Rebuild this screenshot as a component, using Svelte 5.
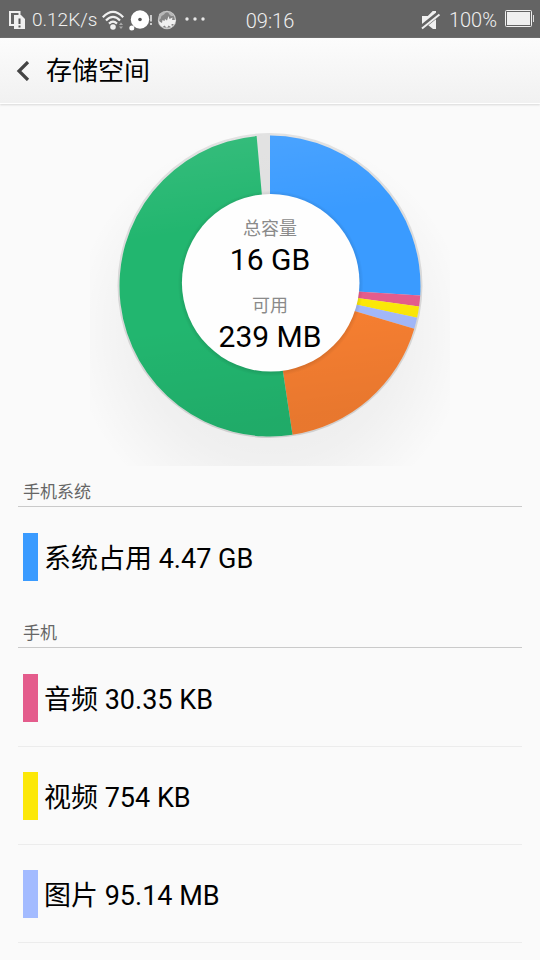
<script>
  const total = "16 GB"
  const available = "239 MB"

  // angles in degrees, clockwise from the top
  const slices = [
    { from: 0, to: 93.6, color: "#3a9bff" },
    { from: 93.6, to: 97.8, color: "#e45c8c" },
    { from: 97.8, to: 102.2, color: "#fce808" },
    { from: 102.2, to: 106.5, color: "#a3b9fb" },
    { from: 106.5, to: 171.4, color: "#f77f31" },
    { from: 171.4, to: 354.9, color: "#22b66f" },
  ]

  const groups = [
    {
      title: "手机系统",
      items: [{ name: "系统占用", size: "4.47 GB", color: "#3a9bff" }],
    },
    {
      title: "手机",
      items: [
        { name: "音频", size: "30.35 KB", color: "#e45c8c" },
        { name: "视频", size: "754 KB", color: "#fce808" },
        { name: "图片", size: "95.14 MB", color: "#a3bbff" },
      ],
    },
  ]

  function point(angle, r) {
    const rad = (angle * Math.PI) / 180
    return `${(180 + r * Math.sin(rad)).toFixed(2)} ${(180 - r * Math.cos(rad)).toFixed(2)}`
  }

  function slicePath({ from, to }) {
    const large = to - from > 180 ? 1 : 0
    return `M180 180L${point(from, 150.5)}A150.5 150.5 0 ${large} 1 ${point(to, 150.5)}Z`
  }
</script>

<div class="status-bar">
  <div class="status-side">
    <svg width="17" height="19" viewBox="0 0 17 19" aria-hidden="true">
      <path d="M5 14H1V1H10.500V4" fill="none" stroke="#f0f0f0" stroke-width="2" />
      <path d="M5 4H12L16 8V18H5Z" fill="#f0f0f0" />
      <path d="M10.500 7.500V13M10.500 14.500V16.500" stroke="#555" stroke-width="2" />
    </svg>
    <span class="speed">0.12K/s</span>
    <svg width="23" height="20" viewBox="0 0 23 20" aria-hidden="true">
      <g fill="none" stroke="#f0f0f0" stroke-width="2.200">
        <path d="M.8 7.200Q11 -3.500 21.200 7.200" />
        <path d="M4 10.600Q11 3.300 18 10.600" />
        <path d="M7 13.600Q11 9.800 15 13.600" />
      </g>
      <circle cx="11" cy="17" r="2.800" fill="#f0f0f0" />
      <path d="M17 15L19 12.500L21 15ZM17 16.500L19 19L21 16.500Z" fill="#aaa" />
    </svg>
    <svg class="disc" width="24" height="21" viewBox="0 0 24 21" aria-hidden="true">
      <circle cx="11" cy="9.500" r="9.200" fill="#fff" />
      <circle cx="11" cy="9.500" r="1.800" fill="#555" />
      <circle cx="2.800" cy="18" r="2.500" fill="#fff" />
      <path d="M22 5V11.500M22 13V15" stroke="#eee" stroke-width="1.500" />
    </svg>
    <svg class="globe" width="20" height="20" viewBox="0 0 20 20" aria-hidden="true">
      <circle cx="10" cy="10" r="8.500" fill="#858585" stroke="#c8c8c8" stroke-width="1.400" />
      <path d="M2 4L6 1.500L9 2L7 4.500L4.500 6L3.500 9L1.500 10ZM11 1.500L15 3L17 6L14 6L12 4Z" fill="#b8b8b8" />
      <path d="M1.500 11L5 13L5.500 10L7.500 11L8 9L10 10.500L11.500 6L12.500 9L15.500 7.500L15 10L18.800 10L17.500 14L14.500 14L15 17.500L11.500 15.500L10 18L7.500 15.500L5.500 17L3 15Z" fill="#f0f0f0" />
    </svg>
    <svg class="more" width="20" height="4" viewBox="0 0 20 4" aria-hidden="true">
      <g fill="#e8e8e8">
        <circle cx="2" cy="2" r="1.700" />
        <circle cx="10" cy="2" r="1.700" />
        <circle cx="18" cy="2" r="1.700" />
      </g>
    </svg>
  </div>
  <time>09:16</time>
  <div class="status-side right">
    <svg width="20" height="20" viewBox="0 0 20 20" aria-hidden="true">
      <path d="M1 6H7L12 1H15V19H12L7 15H1Z" fill="#f0f0f0" />
      <path d="M0 18L18 3.500" stroke="#646464" stroke-width="5" />
      <path d="M1 18.500L18.500 4.500" stroke="#f0f0f0" stroke-width="2" />
      <path d="M1 6H7L12 1H14.500L1 12.500Z" fill="#f0f0f0" />
    </svg>
    <span>100%</span>
    <svg class="battery" width="29" height="18" viewBox="0 0 29 18" aria-hidden="true">
      <rect x=".5" y=".5" width="26" height="16" rx="1" fill="none" stroke="#f0f0f0" />
      <rect x="2" y="2" width="23" height="13" fill="#f0f0f0" />
      <path d="M28.500 5V12" stroke="#ddd" />
    </svg>
  </div>
</div>

<header>
  <button class="back" aria-label="返回">
    <svg width="14" height="20" viewBox="0 0 14 20">
      <path d="M12 1L3 10L12 19" fill="none" stroke="#444" stroke-width="3.200" />
    </svg>
  </button>
  <h1>存储空间</h1>
</header>

<main>
  <div class="chart">
    <svg width="360" height="360" viewBox="0 0 360 360" aria-hidden="true">
      <defs>
        <radialGradient id="ground" gradientUnits="userSpaceOnUse" cx="180" cy="225" r="200">
          <stop offset="0.400" stop-color="#000" stop-opacity="0.055" />
          <stop offset="0.650" stop-color="#000" stop-opacity="0.040" />
          <stop offset="1" stop-color="#000" stop-opacity="0" />
        </radialGradient>
        <linearGradient id="shade" x1="0" y1="0" x2="0.150" y2="1">
          <stop offset="0" stop-color="#fff" stop-opacity="0.100" />
          <stop offset="0.350" stop-color="#fff" stop-opacity="0" />
          <stop offset="0.650" stop-color="#000" stop-opacity="0" />
          <stop offset="1" stop-color="#000" stop-opacity="0.060" />
        </linearGradient>
        <linearGradient id="rim" x1="0" y1="0" x2="0" y2="1">
          <stop offset="0" stop-color="#e2e2e2" />
          <stop offset="1" stop-color="#cfcfcf" />
        </linearGradient>
        <radialGradient id="inset" gradientUnits="userSpaceOnUse" cx="180.700" cy="177.500" r="93">
          <stop offset="0.930" stop-color="#000" stop-opacity="0.140" />
          <stop offset="1" stop-color="#000" stop-opacity="0" />
        </radialGradient>
      </defs>
      <rect width="360" height="360" fill="url(#ground)" />
      <circle cx="180" cy="179.500" r="152.500" fill="url(#rim)" />
      <circle cx="180" cy="180" r="150.500" fill="#e0e0e0" />
      {#each slices as slice}
        <path d={slicePath(slice)} fill={slice.color} />
      {/each}
      <circle cx="180" cy="180" r="150.500" fill="url(#shade)" />
      <circle cx="180.700" cy="177.500" r="93" fill="url(#inset)" />
      <circle cx="180.700" cy="176.800" r="88.800" fill="#fefefe" />
    </svg>
    <dl>
      <div>
        <dt>总容量</dt>
        <dd>{total}</dd>
      </div>
      <div>
        <dt>可用</dt>
        <dd>{available}</dd>
      </div>
    </dl>
  </div>

  {#each groups as group}
    <section>
      <h2>{group.title}</h2>
      <ul>
        {#each group.items as item}
          <li>
            <span class="swatch" style="background: {item.color}"></span>
            <span class="label">{item.name} {item.size}</span>
          </li>
        {/each}
      </ul>
    </section>
  {/each}
</main>

<style>
  :global(body) {
    margin: 0;
    background: #fafafa;
    color: #000;
    font-family: Roboto, "Noto Sans CJK SC", sans-serif;
  }

  .status-bar {
    display: grid;
    grid-template-columns: 1fr auto 1fr;
    align-items: center;
    height: 38px;
    padding: 0 6px;
    background: #646464;
    color: #f0f0f0;
    font-size: 20px;
    font-weight: 300;
    line-height: 38px;
  }
  .status-side {
    display: flex;
    align-items: center;
    height: 36px;
    padding-left: 3px;
  }
  .right {
    justify-content: flex-end;
    gap: 8px;
  }
  .speed {
    padding: 0 5px 0 6px;
    font-size: 19px;
  }
  .disc {
    margin-left: 4px;
  }
  .globe {
    margin: 0 8px 0 4px;
  }
  .more,
  .battery {
    margin-bottom: 2px;
  }
  time {
    padding-top: 2px;
  }

  header {
    display: flex;
    align-items: center;
    height: 65px;
    background: linear-gradient(#fcfcfc, #f1f1f1);
    border-bottom: 1px solid #fff;
    box-shadow: 0 1px 2px #d8d8d8;
  }
  .back {
    display: flex;
    padding: 12px 16px;
    border: 0;
    background: none;
  }
  h1 {
    margin: 0;
    font-size: 26px;
    font-weight: 400;
    line-height: 38px;
  }

  main {
    padding: 0 18px;
  }
  .chart {
    display: grid;
    place-items: center;
    padding-top: 2px;
  }
  .chart svg,
  .chart dl {
    grid-area: 1 / 1;
  }
  dl {
    display: grid;
    gap: 15px;
    margin: 0;
    text-align: center;
  }
  dt {
    color: #8a8a8a;
    font-size: 18px;
    line-height: 24px;
  }
  dd {
    margin: 0;
    font-size: 30px;
    line-height: 38px;
  }

  h2 {
    margin: 0;
    padding: 14px 5px 2px;
    border-bottom: 1px solid #cacaca;
    color: #666;
    font-size: 17px;
    font-weight: 400;
    line-height: 24px;
  }
  ul {
    margin: 0;
    padding: 1px 0 2px;
    list-style: none;
  }
  li {
    display: flex;
    gap: 6px;
    padding: 25px 5px 24px;
    font-size: 27px;
    line-height: 48px;
  }
  section:last-child li {
    border-bottom: 1px solid #ececec;
  }
  .swatch {
    width: 15px;
    height: 48px;
  }
  .label {
    padding-top: 2px;
    margin-bottom: -2px;
  }
</style>
